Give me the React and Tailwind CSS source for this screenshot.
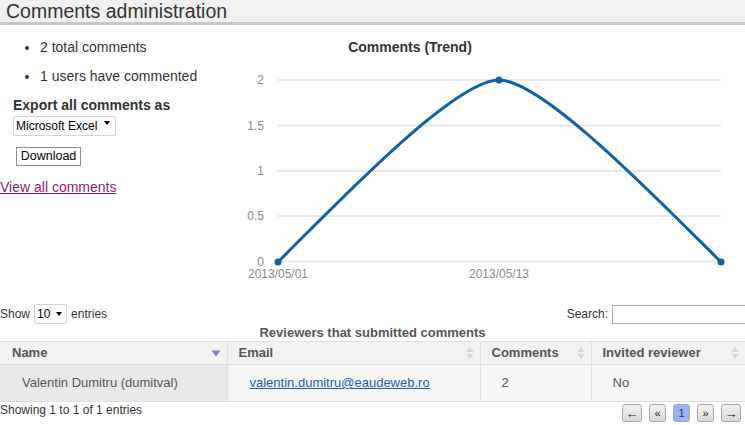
import { useState } from 'react'

const reviewers = [
  { name: 'Valentin Dumitru (dumitval)', email: 'valentin.dumitru@eaudeweb.ro', comments: 2, invited: 'No' },
]

function SortBoth() {
  return (
    <svg width="8" height="14" viewBox="0 0 8 14" className="shrink-0">
      <path d="M4 1 L7.5 6 L0.5 6 Z" fill="#d6d6d6" />
      <path d="M4 13 L7.5 8 L0.5 8 Z" fill="#d6d6d6" />
    </svg>
  )
}

function SortDesc() {
  return (
    <svg width="10" height="7" viewBox="0 0 10 7" className="shrink-0">
      <path d="M0.5 0.5 L9.5 0.5 L5 6.5 Z" fill="#7f7fe0" />
    </svg>
  )
}

function TrendChart() {
  const grid = [
    { label: '2', y: 80 },
    { label: '1.5', y: 125.5 },
    { label: '1', y: 171 },
    { label: '0.5', y: 216 },
    { label: '0', y: 261.5 },
  ]
  return (
    <svg width="515" height="265" viewBox="230 25 515 265" className="block">
      <text x="410" y="52" textAnchor="middle" fontSize="14" fontWeight="bold" fill="#333" fontFamily="Liberation Sans, Arial, sans-serif">
        Comments (Trend)
      </text>
      {grid.map((g) => (
        <g key={g.label}>
          <line x1="278" x2="721" y1={g.y} y2={g.y} stroke="#e3e3e3" strokeWidth="1.5" />
          <text x="264" y={g.y + 4} textAnchor="end" fontSize="12" fill="#8a8a8a" fontFamily="Liberation Sans, Arial, sans-serif">
            {g.label}
          </text>
        </g>
      ))}
      <text x="278" y="278" textAnchor="middle" fontSize="12" fill="#8a8a8a" fontFamily="Liberation Sans, Arial, sans-serif">2013/05/01</text>
      <text x="499" y="278" textAnchor="middle" fontSize="12" fill="#8a8a8a" fontFamily="Liberation Sans, Arial, sans-serif">2013/05/13</text>
      <path d="M278 262 C 340 200 455 80 499 80 S 658 200 721 262" fill="none" stroke="#1261a6" strokeWidth="3" />
      <circle cx="278" cy="262" r="3.5" fill="#1261a6" />
      <circle cx="499" cy="80" r="3.5" fill="#1261a6" />
      <circle cx="721" cy="262" r="3.5" fill="#1261a6" />
    </svg>
  )
}

function PageButton({ children, active, wide }) {
  return (
    <span
      className={`flex h-[18px] items-center justify-center rounded-[3px] border border-[#a8a8a8] leading-none ${
        wide ? 'w-[20px] text-[13px] font-bold' : 'w-[17px] text-[11px]'
      } ${active ? 'bg-[#9cb0fa] text-[#333]' : 'bg-gradient-to-b from-[#f2f2f2] to-[#d9d9d9] text-[#222]'}`}
    >
      {children}
    </span>
  )
}

export default function App() {
  const [format, setFormat] = useState('excel')
  const [pageSize, setPageSize] = useState('10')

  return (
    <div className="h-[425px] w-[745px] overflow-hidden bg-white font-['Liberation_Sans',Arial,sans-serif] text-[#333]">
      <div className="h-[25px] border-b-[3px] border-[#c8c8c8] bg-[#f0f0f0] pl-[6px] text-[19.5px] leading-[22px] text-[#333]">
        Comments administration
      </div>

      <div className="flex h-[265px]">
        <div className="w-[230px] shrink-0">
          <ul className="list-disc pl-[40px] pt-[12px] text-[14px] leading-[20px] marker:text-[#333]">
            <li className="mb-[9px]">2 total comments</li>
            <li>1 users have commented</li>
          </ul>
          <h3 className="mt-[11px] pl-[13px] text-[14px] font-bold leading-[16px]">Export all comments as</h3>
          <div className="relative ml-[13px] h-[20px] w-[103px]">
            <select
              value={format}
              onChange={(e) => setFormat(e.target.value)}
              className="h-[20px] w-[103px] appearance-none rounded-[2px] border border-[#d4d4d4] bg-white pl-[2px] text-[12px] text-black outline-none"
            >
              <option value="excel">Microsoft Excel</option>
              <option value="csv">CSV</option>
            </select>
            <span className="pointer-events-none absolute right-[6px] top-[8px] border-x-[3.5px] border-t-[4px] border-x-transparent border-t-black" />
          </div>
          <button
            type="button"
            className="ml-[16px] mt-[14px] h-[19px] w-[65px] border border-[#8c8c8c] bg-white text-[12.5px] leading-[17px] text-black"
          >
            Download
          </button>
          <a href="#" className="mt-[11px] block text-[14px] leading-[18px] text-[#8e1f6e] underline">
            View all comments
          </a>
        </div>
        <div>
          <TrendChart />
        </div>
      </div>

      <div className="mt-[14px] flex h-[20px] items-center text-[12px]">
        <span>Show</span>
        <div className="relative mx-[4px] h-[20px] w-[33px]">
          <select
            value={pageSize}
            onChange={(e) => setPageSize(e.target.value)}
            className="h-[20px] w-[33px] appearance-none rounded-[2px] border border-[#d4d4d4] bg-white pl-[2px] text-[12px] text-black outline-none"
          >
            <option value="10">10</option>
            <option value="25">25</option>
            <option value="50">50</option>
          </select>
          <span className="pointer-events-none absolute right-[5px] top-[8px] border-x-[3.5px] border-t-[4px] border-x-transparent border-t-black" />
        </div>
        <span>entries</span>
        <span className="ml-auto mr-[4px]">Search:</span>
        <input className="mr-[-10px] h-[19px] w-[143px] border border-[#a9a9a9] outline-none" />
      </div>

      <div className="h-[17px] text-center text-[13px] font-bold leading-[17px] text-[#555]">
        Reviewers that submitted comments
      </div>

      <table className="w-[745px] table-fixed border-collapse text-[13px]">
        <colgroup>
          <col className="w-[227px]" />
          <col className="w-[253px]" />
          <col className="w-[111px]" />
          <col className="w-[154px]" />
        </colgroup>
        <thead>
          <tr className="h-[23px] bg-[#f2f2f2] text-left font-bold text-[#555]">
            <th className="border border-l-0 border-[#dedede] pl-[12px] pr-[6px]">
              <div className="flex items-center justify-between">
                <span>Name</span>
                <SortDesc />
              </div>
            </th>
            <th className="border border-[#dedede] pl-[11px] pr-[6px]">
              <div className="flex items-center justify-between">
                <span>Email</span>
                <SortBoth />
              </div>
            </th>
            <th className="border border-[#dedede] pl-[11px] pr-[6px]">
              <div className="flex items-center justify-between">
                <span>Comments</span>
                <SortBoth />
              </div>
            </th>
            <th className="border border-r-0 border-[#dedede] pl-[11px] pr-[6px]">
              <div className="flex items-center justify-between">
                <span>Invited reviewer</span>
                <SortBoth />
              </div>
            </th>
          </tr>
        </thead>
        <tbody>
          {reviewers.map((r) => (
            <tr key={r.email} className="h-[37px] text-[#555]">
              <td className="border border-l-0 border-[#dedede] bg-[#e9e9e9] pl-[22px]">{r.name}</td>
              <td className="border border-[#dedede] bg-[#f6f6f6] pl-[22px]">
                <a href="#" className="text-[#1c5fb0] underline">{r.email}</a>
              </td>
              <td className="border border-[#dedede] bg-[#f6f6f6] pl-[21px]">{r.comments}</td>
              <td className="border border-r-0 border-[#dedede] bg-[#f6f6f6] pl-[21px]">{r.invited}</td>
            </tr>
          ))}
        </tbody>
      </table>

      <div className="flex items-start justify-between pr-[4px]">
        <span className="pt-[1px] text-[12px] leading-[14px]">Showing 1 to 1 of 1 entries</span>
        <div className="mt-[2px] flex gap-[7px]">
          <PageButton wide>&larr;</PageButton>
          <PageButton>&laquo;</PageButton>
          <PageButton active>1</PageButton>
          <PageButton>&raquo;</PageButton>
          <PageButton wide>&rarr;</PageButton>
        </div>
      </div>
    </div>
  )
}
